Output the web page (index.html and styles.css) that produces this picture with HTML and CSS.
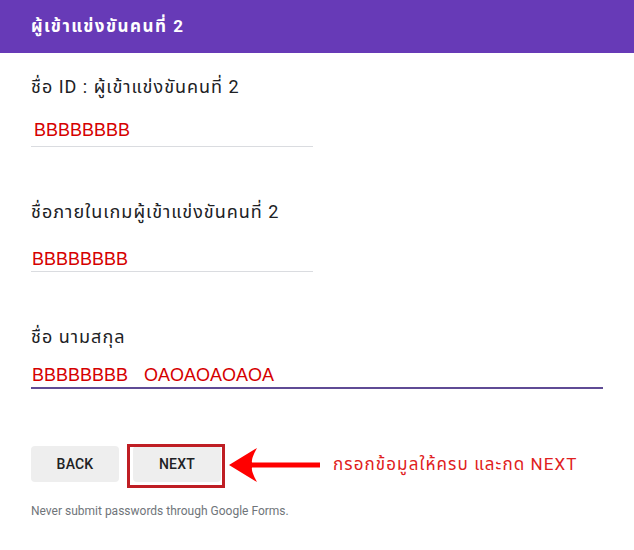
FILE: index.html
```html
<!DOCTYPE html>
<html lang="th">

<head>
    <meta charset="UTF-8">
    <title>ผู้เข้าแข่งขันคนที่ 2</title>
    <link rel="stylesheet" href="styles.css">
</head>

<body>
    <header class="bar">
        <h1>ผู้เข้าแข่งขันคนที่ 2</h1>
    </header>

    <main class="form">
        <section class="question q1">
            <p class="label">ชื่อ ID : ผู้เข้าแข่งขันคนที่ 2</p>
            <div class="answer">
                <span class="value">BBBBBBBB</span>
            </div>
        </section>

        <section class="question q2">
            <p class="label">ชื่อภายในเกมผู้เข้าแข่งขันคนที่ 2</p>
            <div class="answer">
                <span class="value">BBBBBBBB</span>
            </div>
        </section>

        <section class="question q3">
            <p class="label">ชื่อ นามสกุล</p>
            <div class="answer focused">
                <span class="value">BBBBBBBB&nbsp; OAOAOAOAOA</span>
            </div>
        </section>

        <nav class="knapper">
            <button class="knap">BACK</button>
            <button class="knap marker">NEXT</button>
            <svg class="pil" width="92" height="36" viewBox="0 0 92 36">
                <path d="M0 18 L28 1 Q22 12 23 15.5 L91 15.5 L91 20.5 L23 20.5 Q22 24 28 35 Z" fill="#f00" />
            </svg>
            <span class="note">กรอกข้อมูลให้ครบ และกด NEXT</span>
        </nav>

        <p class="footer">Never submit passwords through Google Forms.</p>
    </main>
</body>

</html>
```

FILE: styles.css
```css
* {
    box-sizing: border-box;
}

body {
    margin: 0;
    background: #fff;
    font-family: Roboto, "Noto Sans Thai", "Noto Sans", "Liberation Sans", sans-serif;
    color: #202124;
}

.bar {
    height: 53px;
    background-color: #673ab7;
    display: flex;
    align-items: center;
    padding-left: 31px;
}

.bar h1 {
    margin: 0;
    font-size: 17px;
    font-weight: bold;
    letter-spacing: 1.5px;
    color: #fff;
    padding-top: 1px;
}

.form {
    padding: 0 31px;
}

.question {
    margin-top: 53px;
}

.q1 {
    margin-top: 22px;
}

.label {
    margin: 0;
    font-size: 18px;
    line-height: 24px;
    letter-spacing: 1px;
    color: #202124;
}

.answer {
    width: 282px;
    border-bottom: 1px solid #dadce0;
    padding-left: 2px;
}

.value {
    display: block;
    font-family: "Liberation Sans", Arial, sans-serif;
    font-size: 18px;
    line-height: 20px;
    word-spacing: 3px;
    color: #d50000;
}

.q1 .answer {
    padding-top: 21px;
    padding-bottom: 6px;
    padding-left: 3px;
}

.q2 .answer {
    padding-top: 25px;
    padding-bottom: 2px;
    padding-left: 1px;
}

.q3 .answer {
    padding-top: 16px;
    padding-bottom: 2px;
    padding-left: 1px;
}

.answer.focused {
    width: 572px;
    border-bottom: 2px solid #5f4b95;
}

.knapper {
    display: flex;
    align-items: center;
    margin-top: 56px;
}

.knap {
    width: 88px;
    height: 36px;
    border: none;
    border-radius: 4px;
    background-color: #eeeeee;
    font-family: Roboto, sans-serif;
    font-weight: 500;
    font-size: 14px;
    letter-spacing: 0.2px;
    color: #202124;
    padding: 0;
}

.marker {
    position: relative;
    margin-left: 14px;
}

/* rød ramme rundt om NEXT */
.marker::after {
    content: "";
    position: absolute;
    top: -2px;
    left: -6px;
    right: -4px;
    bottom: -6px;
    border: 3px solid #bf1e24;
}

.pil {
    margin-left: 8px;
    margin-top: 2px;
}

.note {
    margin-left: 12px;
    margin-top: 2px;
    font-size: 17px;
    letter-spacing: 1.1px;
    color: #e02020;
}

.footer {
    margin: 20px 0 0;
    font-size: 12px;
    line-height: 16px;
    color: #70757a;
}
```
